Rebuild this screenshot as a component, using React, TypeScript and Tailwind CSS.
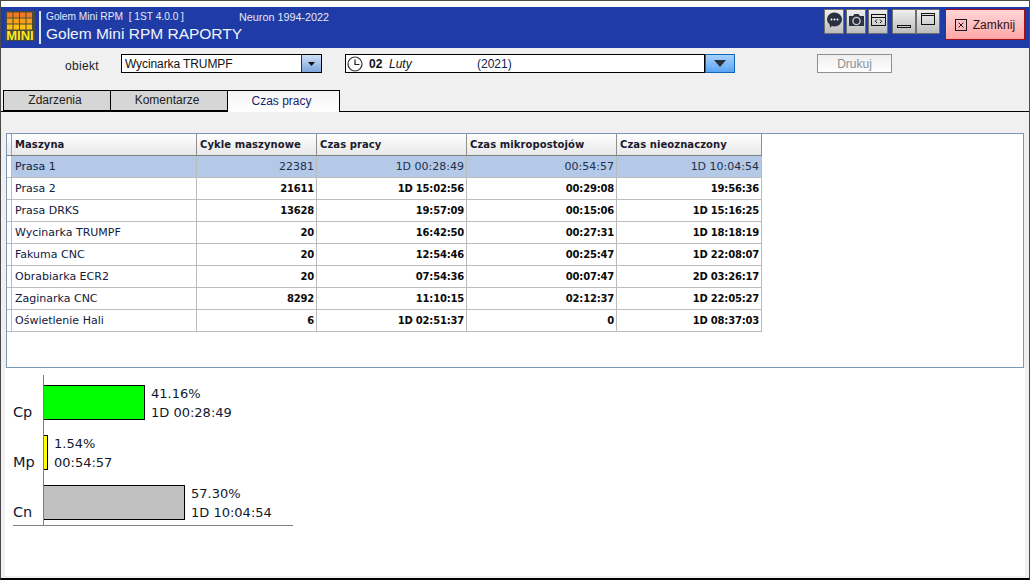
import React from "react";

const rows = [
  ["Prasa 1", "22381", "1D 00:28:49", "00:54:57", "1D 10:04:54"],
  ["Prasa 2", "21611", "1D 15:02:56", "00:29:08", "19:56:36"],
  ["Prasa DRKS", "13628", "19:57:09", "00:15:06", "1D 15:16:25"],
  ["Wycinarka TRUMPF", "20", "16:42:50", "00:27:31", "1D 18:18:19"],
  ["Fakuma CNC", "20", "12:54:46", "00:25:47", "1D 22:08:07"],
  ["Obrabiarka ECR2", "20", "07:54:36", "00:07:47", "2D 03:26:17"],
  ["Zaginarka CNC", "8292", "11:10:15", "02:12:37", "1D 22:05:27"],
  ["Oświetlenie Hali", "6", "1D 02:51:37", "0", "1D 08:37:03"],
];
const headers = ["Maszyna", "Cykle maszynowe", "Czas pracy", "Czas mikropostojów", "Czas nieoznaczony"];
const cols = ["w-[185px]", "w-[120px]", "w-[150px]", "w-[150px]", "w-[145px]"];

function Logo() {
  const cells = [];
  for (let r = 0; r < 3; r++) {
    for (let c = 0; c < 4; c++) {
      cells.push(<rect key={r + "-" + c} x={2 + c * 6.5} y={1.5 + r * 6} width={5.5} height={5} fill={r === 0 ? "#f07a20" : r === 1 ? "#f8a018" : "#fcc010"} />);
    }
  }
  return (
    <div className="relative w-[30px] h-[30px] bg-[#4a4a3a] shrink-0">
      <svg width="30" height="20" viewBox="0 0 30 20" className="block">{cells}</svg>
      <span className="absolute left-0 right-0 top-[19px] text-center text-[13px] leading-[11px] font-bold text-[#ffe820]">MINI</span>
    </div>
  );
}

function IconBtn({ children, w = "w-[20px]" }: { children: React.ReactNode; w?: string }) {
  return (
    <div className={`${w} h-[25px] border border-[#6e6e6e] bg-gradient-to-b from-[#efefef] to-[#bdbdbd] flex items-start justify-center pt-[1px]`}>
      {children}
    </div>
  );
}

function Tab({ label, active, w }: { label: string; active?: boolean; w: string }) {
  return (
    <div
      className={`${w} border border-black flex items-center justify-center text-[12px] pr-[4px] pb-[2px] ${
        active
          ? "h-[22px] border-b-0 bg-gradient-to-b from-[#f4f4f4] to-white text-[#1c1c6e] -ml-[1px] z-10 -mb-[1px]"
          : "h-[21px] bg-[#d6d6d6] text-[#222] -ml-[1px] first:ml-0"
      }`}
    >
      {label}
    </div>
  );
}

function Bar({ label, color, w, pct, time }: { label: string; color: string; w: string; pct: string; time: string }) {
  return (
    <div className="flex h-[35px] items-stretch">
      <div className="w-[30px] flex items-end text-[14.5px] leading-[16px] text-[#10182e]">{label}</div>
      <div className={`${w} ${color} border border-black`} />
      <div className="pl-[6px] text-[13px] leading-[19px] text-[#10182e] whitespace-nowrap -mt-[1px]">
        <div>{pct}</div>
        <div>{time}</div>
      </div>
    </div>
  );
}

export default function App() {
  return (
    <div className="w-[1030px] h-[580px] bg-[#f0f0f0] flex flex-col border border-[#4a4a4a] border-b-2 border-b-black font-[Liberation_Sans,sans-serif] overflow-hidden">
      <div className="h-[6px] bg-white shrink-0" />
      <header className="h-[41px] bg-[#1e3ba6] flex shrink-0 pl-[4px] text-white">
        <div className="pt-[4px]"><Logo /></div>
        <div className="w-[2px] h-[33px] bg-[#dfe4f2] ml-[4px] mt-[4px]" />
        <div className="ml-[5px] flex flex-col">
          <div className="flex leading-[12px] pt-[4px] text-[#e6eaf8] whitespace-pre">
            <span className="w-[193px] text-[10.2px]">Golem Mini RPM  [ 1ST 4.0.0 ]</span>
            <span className="text-[10.8px]">Neuron 1994-2022</span>
          </div>
          <div className="text-[15.500px] leading-[18px] mt-[2px] text-[#f2f4fc] whitespace-nowrap">Golem Mini RPM RAPORTY</div>
        </div>
        <div className="ml-auto flex items-start pt-[2px] pr-[4px]">
          <div className="flex gap-[2px] mr-[4px]">
            <IconBtn>
              <svg width="17" height="18" viewBox="0 0 17 18">
                <path d="M8.500 1.500a7.500 7 0 0 1 0 14c-1 0-2-.2-2.800-.5L4 17l-.3-3.200A7.500 7 0 0 1 8.500 1.500z" fill="#2a3242" />
                <circle cx="5.500" cy="8.500" r="1" fill="#fff" /><circle cx="8.500" cy="8.500" r="1" fill="#fff" /><circle cx="11.500" cy="8.500" r="1" fill="#fff" />
              </svg>
            </IconBtn>
            <IconBtn>
              <svg width="17" height="18" viewBox="0 0 17 18">
                <path d="M1 5h4l1.500-2h4L12 5h4v10H1z" fill="#2a3242" />
                <circle cx="8.500" cy="10" r="3.600" fill="none" stroke="#c8ccd0" strokeWidth="1.400" />
              </svg>
            </IconBtn>
            <IconBtn>
              <svg width="17" height="18" viewBox="0 0 17 18" fill="none" stroke="#111">
                <rect x="1.500" y="3.500" width="14" height="11" />
                <path d="M1.500 6.500h14" />
                <path d="M7 8.500 5.300 10.300 7 12M10 8.500l1.700 1.800L10 12" />
              </svg>
            </IconBtn>
          </div>
          <div className="flex mr-[5px]">
            <IconBtn w="w-[24px]">
              <svg width="18" height="20" viewBox="0 0 18 20"><rect x="2.500" y="14.500" width="13" height="2" fill="none" stroke="#111" /></svg>
            </IconBtn>
            <IconBtn w="w-[24px]">
              <svg width="18" height="20" viewBox="0 0 18 20" fill="none" stroke="#111"><rect x="2.500" y="2.500" width="13" height="11" /><path d="M2.500 4.500h13" /></svg>
            </IconBtn>
          </div>
          <div className="w-[80px] h-[31px] border border-[#a80c14] bg-gradient-to-b from-[#ffd6d6] to-[#ffa6a6] flex items-center justify-center gap-[6px] text-[12px] text-[#301018] tracking-[0.1px]">
            <svg width="12" height="12" viewBox="0 0 12 12" fill="none" stroke="#181828"><rect x=".5" y=".5" width="11" height="11" /><path d="M3.500 3.500l5 5M8.500 3.500l-5 5" /></svg>
            Zamknij
          </div>
        </div>
      </header>
      <div className="h-[42px] shrink-0 flex items-start pt-[6px] text-[12px]">
        <div className="w-[120px] pl-[64px] pt-[3px] text-[#222] tracking-[0.3px]">obiekt</div>
        <div className="w-[201px] h-[19px] border border-black bg-white flex items-center pl-[3px] text-[#111] relative tracking-[-0.1px]">
          Wycinarka TRUMPF
          <div className="absolute right-0 top-0 bottom-0 w-[20px] border-l border-[#333] bg-gradient-to-b from-[#cfe0f6] to-[#7ea6dc] flex items-center justify-center">
            <svg width="7" height="4" viewBox="0 0 7 4"><path d="M0 0h7L3.500 4z" fill="#111" /></svg>
          </div>
        </div>
        <div className="ml-[23px] w-[360px] h-[19px] border border-black bg-white flex items-center text-[#111]">
          <svg width="18" height="18" viewBox="0 0 18 18" fill="none">
            <circle cx="9" cy="9" r="7" stroke="#333" strokeWidth="1.200" />
            <path d="M9 4.500V9.500H13.500" stroke="#222" strokeWidth="1.200" />
          </svg>
          <b className="ml-[5px] font-bold w-[20px]">02</b>
          <i className="w-[88px] ml-[0px]">Luty</i>
          <span className="text-[#102050]">(2021)</span>
        </div>
        <div className="w-[30px] h-[19px] border border-[#1466b4] bg-gradient-to-b from-[#a6d2fc] to-[#5aa4f4] flex items-center justify-center">
          <svg width="12" height="7" viewBox="0 0 12 7"><path d="M0 0h12L6 7z" fill="#2c3038" /></svg>
        </div>
        <div className="ml-[82px] w-[75px] h-[19px] border border-[#909090] bg-gradient-to-b from-[#efefef] to-white text-[#8a8f96] text-[12px] flex items-center justify-center">Drukuj</div>
      </div>
      <div className="h-[21px] shrink-0 flex pl-[2px] items-start">
        <Tab label="Zdarzenia" w="w-[108px]" />
        <Tab label="Komentarze" w="w-[118px]" />
        <Tab label="Czas pracy" active w="w-[113px]" />
      </div>
      <main className="flex-1 flex flex-col border-t border-black">
        <div className="h-[21px] shrink-0" />
        <section className="mx-[5px] h-[235px] shrink-0 border border-[#7c98b8] bg-white flex flex-col pr-[1px] font-[DejaVu_Sans,sans-serif]">
          <div className="flex h-[22px] bg-gradient-to-b from-white to-[#e8e8e8] border-b border-[#808080] w-[755px]">
            <div className="w-[5px] border-r border-[#a0a0a0]" />
            {headers.map((h, i) => (
              <div key={h} className={`${cols[i]} border-r border-[#909090] pl-[3px] flex items-center font-bold text-[#1a1a2e] whitespace-nowrap text-[10px] tracking-[0.08px]`}>{h}</div>
            ))}
          </div>
          {rows.map((r, ri) => (
            <div key={r[0]} className={`flex h-[22px] w-[755px] border-b border-[#bcbcbc] ${ri === 0 ? "bg-[#b4c9e8]" : ""}`}>
              <div className="w-[5px] border-r border-[#bcbcbc] bg-white" />
              {r.map((c, i) => (
                <div
                  key={i}
                  className={`${cols[i]} border-r border-[#bcbcbc] flex items-center whitespace-nowrap ${
                    i === 0
                      ? "pl-[3px] pt-[1px] text-[#102040] text-[11px]"
                      : `justify-end pr-[2px] ${ri === 0 ? "text-[#20304a] text-[11px] pt-[1px]" : "font-bold text-[#0a0a0a] text-[10px] tracking-[-0.2px]"}`
                  }`}
                >
                  {c}
                </div>
              ))}
            </div>
          ))}
        </section>
        <section className="flex-1 bg-white mx-[4px] mb-[2px] pt-[7px] font-[DejaVu_Sans,sans-serif] pl-[8px]">
          <div className="relative flex flex-col gap-[15px] pt-[10px] pb-[5px] w-[280px] border-b border-[#808080] h-[151px]">
            <div className="absolute left-[30px] top-0 bottom-0 w-px bg-[#808080]" />
            <Bar label="Cp" color="bg-[#00ff00]" w="w-[102px]" pct="41.16%" time="1D 00:28:49" />
            <Bar label="Mp" color="bg-[#ffff00]" w="w-[5px]" pct="1.54%" time="00:54:57" />
            <Bar label="Cn" color="bg-[#c0c0c0]" w="w-[142px]" pct="57.30%" time="1D 10:04:54" />
          </div>
        </section>
      </main>
    </div>
  );
}
